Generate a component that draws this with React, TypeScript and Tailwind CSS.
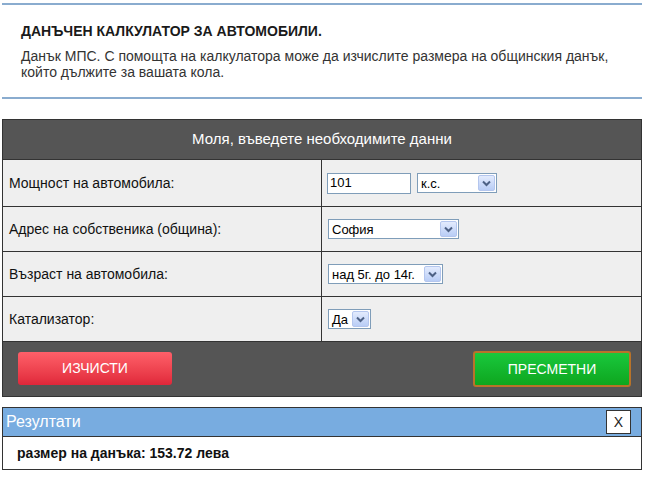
import React from "react";

function Arrow() {
  return (
    <div className="w-[17px] h-[16px] mr-[1px] rounded-[2px] border border-[#b4c6ee] bg-gradient-to-b from-[#e3ebfd] to-[#b9cdf6] flex items-center justify-center">
      <svg width="9" height="7" viewBox="0 0 9 7">
        <path d="M1 1.5 L4.5 5 L8 1.5" fill="none" stroke="#4d6185" strokeWidth="2" />
      </svg>
    </div>
  );
}

function FakeSelect({ w, text }: { w: string; text: string }) {
  return (
    <div className={`${w} h-[20px] border border-[#7f9db9] bg-white flex items-center justify-between`}>
      <span className="pl-[3px] text-[13px] leading-none text-black">{text}</span>
      <Arrow />
    </div>
  );
}

function Row({ label, h, children }: { label: string; h: string; children: React.ReactNode }) {
  return (
    <div className={`flex ${h} border-t border-[#333333] bg-[#efefef]`}>
      <div className="w-[319px] border-r border-[#333333] flex items-center pl-[6px] text-[14px] text-[#111]">{label}</div>
      <div className="flex-1 flex items-center pl-[6px]">{children}</div>
    </div>
  );
}

export default function App() {
  return (
    <div className="w-[660px] h-[477px] bg-white" style={{ fontFamily: '"Liberation Sans", Arial, sans-serif' }}>
      <div className="ml-[2px] w-[640px] pt-[3px]">
        <div className="border-t-2 border-b-2 border-[#8aaccf] pl-[19px] pt-[18px] pb-[17px]">
          <div className="text-[14px] font-bold leading-[16px] text-[#1a1a1a]">ДАНЪЧЕН КАЛКУЛАТОР ЗА АВТОМОБИЛИ.</div>
          <p className="mt-[9px] text-[14px] leading-[16px] text-[#333]">
            Данък МПС. С помощта на калкулатора може да изчислите размера на общинския данък, който дължите за вашата кола.
          </p>
        </div>

        <div className="mt-[20px] border border-[#333333]">
          <div className="h-[39px] bg-[#555555] flex items-center justify-center text-white text-[15px]">
            Моля, въведете необходимите данни
          </div>
          <Row label="Мощност на автомобила:" h="h-[47px]">
            <div className="w-[84px] h-[21px] border border-[#7f9db9] bg-white flex items-center pl-[2px] text-[13px] ml-[-1px]">101</div>
            <div className="ml-[6px]">
              <FakeSelect w="w-[80px]" text="к.с." />
            </div>
          </Row>
          <Row label="Адрес на собственика (община):" h="h-[45px]">
            <FakeSelect w="w-[131px]" text="София" />
          </Row>
          <Row label="Възраст на автомобила:" h="h-[45px]">
            <FakeSelect w="w-[115px]" text="над 5г. до 14г." />
          </Row>
          <Row label="Катализатор:" h="h-[45px]">
            <FakeSelect w="w-[43px]" text="Да" />
          </Row>
          <div className="h-[55px] border-t border-[#333333] bg-[#555555] flex items-center justify-between pl-[15px] pr-[10px]">
            <button className="w-[154px] h-[33px] rounded-[3px] bg-gradient-to-b from-[#ff5f69] to-[#e0263a] text-white text-[14px] mt-[-1px]">
              ИЗЧИСТИ
            </button>
            <button className="w-[158px] h-[36px] rounded-[3px] border-2 border-[#b8732a] bg-gradient-to-b from-[#19c83c] to-[#0ea61e] text-white text-[14px]">
              ПРЕСМЕТНИ
            </button>
          </div>
        </div>

        <div className="mt-[10px] border border-[#333333]">
          <div className="h-[29px] bg-[#78ace0] border-b border-[#333333] flex items-center justify-between pl-[3px] pr-[10px]">
            <span className="text-white text-[16px]">Резултати</span>
            <div className="w-[25px] h-[24px] bg-white border border-[#333333] flex items-center justify-center text-[14px] text-[#222]">X</div>
          </div>
          <div className="h-[32px] bg-white flex items-center pl-[14px] text-[14px] font-bold text-[#111]">
            размер на данъка: 153.72 лева
          </div>
        </div>
      </div>
    </div>
  );
}
